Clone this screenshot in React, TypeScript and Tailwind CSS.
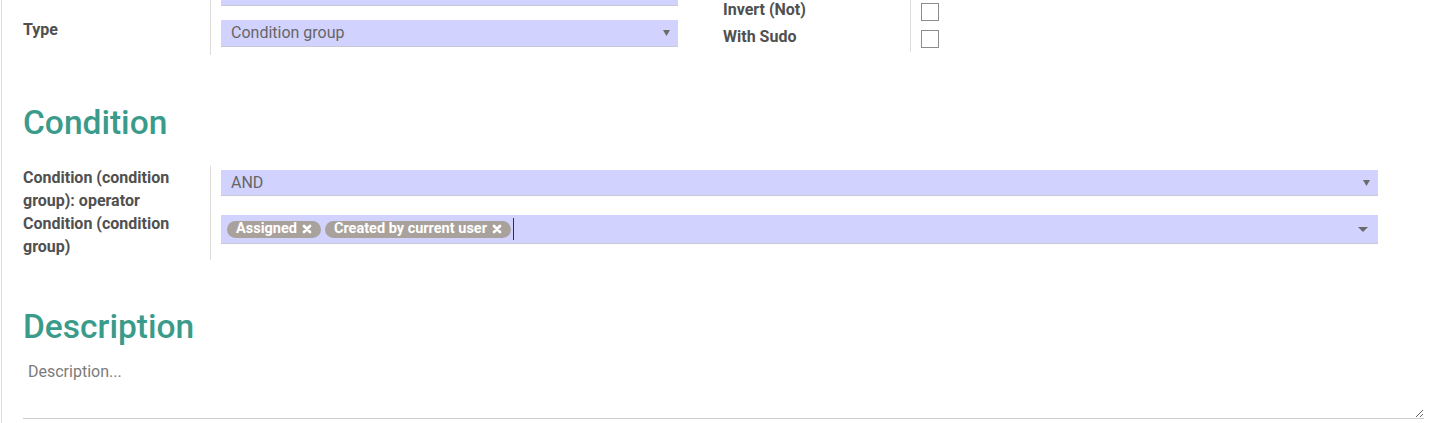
import React from 'react';

function Caret({ wide = false }: { wide?: boolean }) {
  if (wide) {
    return (
      <svg viewBox="0 0 10 5" className="h-[5px] w-[10px]">
        <polygon points="0,0 10,0 5,5" fill="#6b6b6b" />
      </svg>
    );
  }
  return (
    <svg viewBox="0 0 7 6" className="h-[6px] w-[7px]">
      <polygon points="0,0 7,0 3.5,6" fill="#6b6b6b" />
    </svg>
  );
}

function SelectBox({ value, className }: { value: string; className: string }) {
  return (
    <div
      className={`flex items-center justify-between border-b border-[#c9c9d6] bg-[#d2d2ff] pl-[10px] pr-[8px] text-[16px] text-[#666666] ${className}`}
    >
      <span>{value}</span>
      <Caret />
    </div>
  );
}

function Tag({ label }: { label: string }) {
  return (
    <span className="inline-flex h-[17px] items-center rounded-full bg-[#a9a29c] pl-[9px] pr-[9px] text-[14.5px] font-bold leading-none text-white">
      {label}
      <svg viewBox="0 0 10 10" className="ml-[5px] h-[10px] w-[10px]">
        <path d="M2 2 L8 8 M8 2 L2 8" stroke="white" strokeWidth="2.8" strokeLinecap="round" />
      </svg>
    </span>
  );
}

function Checkbox() {
  return <div className="h-[18px] w-[18px] border border-[#8c8c8c] bg-white" />;
}

export default function App() {
  return (
    <div className="h-[423px] overflow-hidden bg-white font-[Roboto,sans-serif]">
      <div className="ml-[1px] h-full border-l border-[#dcdcdc] pl-[21px] pr-[14px]">
        {/* top groups */}
        <div className="flex">
          <div className="flex w-[700px]">
            <div className="h-[55px] w-[188px] border-r border-[#dcdcdc]">
              <div className="mt-[18px] text-[16px] font-bold leading-[23px] text-[#505050]">Type</div>
            </div>
            <div className="flex-1 pl-[10px] pr-[45px]">
              <div className="h-[6px] border-b border-[#c9c9d6] bg-[#d2d2ff]" />
              <SelectBox value="Condition group" className="mt-[14px] h-[27px]" />
            </div>
          </div>
          <div className="flex flex-1">
            <div className="h-[52px] w-[188px] border-r border-[#dcdcdc]">
              <div className="-mt-[4px] text-[16px] font-bold leading-[27px] text-[#505050]">
                <div>Invert (Not)</div>
                <div>With Sudo</div>
              </div>
            </div>
            <div className="flex flex-col gap-[9px] pl-[10px] pt-[3px]">
              <Checkbox />
              <Checkbox />
            </div>
          </div>
        </div>

        {/* Condition */}
        <h1 className="mt-[47px] h-[41px] text-[33.5px] font-medium leading-[42px] text-[#3a9b8b]">Condition</h1>
        <div className="mt-[23px] flex">
          <div className="w-[188px] border-r border-[#dcdcdc] pb-[2px] text-[16px] font-bold leading-[23px] text-[#505050]">
            <div>Condition (condition group): operator</div>
            <div>Condition (condition group)</div>
          </div>
          <div className="flex-1 pl-[10px] pr-[46px]">
            <SelectBox value="AND" className="mt-[4px] h-[26px] pr-[6px]" />
            <div className="mt-[19px] flex h-[29px] items-center border-b border-[#c9c9d6] bg-[#d2d2ff] pl-[6px] pr-[10px]">
              <div className="flex items-center gap-[4px]">
                <Tag label="Assigned" />
                <Tag label="Created by current user" />
              </div>
              <span className="ml-[2px] h-[22px] w-[1px] bg-[#333333]" />
              <div className="ml-auto">
                <Caret wide />
              </div>
            </div>
          </div>
        </div>

        {/* Description */}
        <h1 className="mt-[46px] h-[40px] text-[33.5px] font-medium leading-[42px] text-[#3a9b8b]">Description</h1>
        <textarea
          placeholder="Description..."
          className="mt-[4px] block h-[69px] w-full resize border-b border-[#cccccc] pl-[5px] pt-[10px] text-[16px] leading-[23px] text-[#4c4c4c] outline-none placeholder:text-[#7b7b7b]"
        />
      </div>
    </div>
  );
}
